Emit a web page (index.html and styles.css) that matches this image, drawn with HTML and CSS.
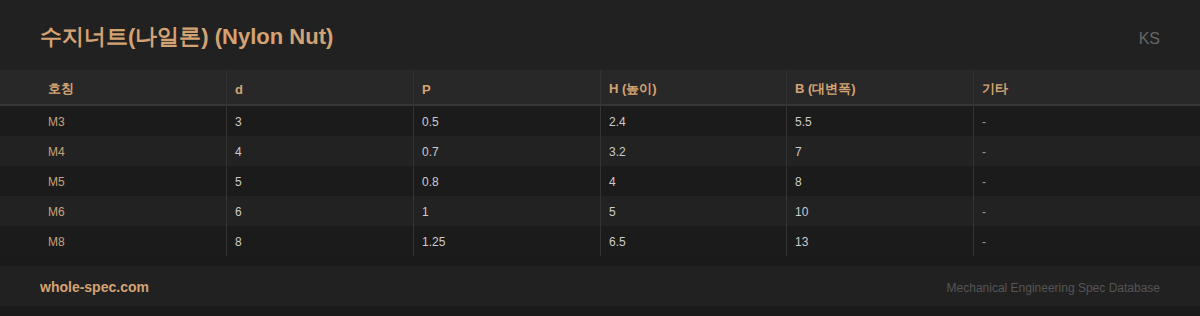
FILE: index.html
```html
<!DOCTYPE html>
<html lang="ko">
<head>
<meta charset="utf-8">
<title>수지너트(나일론) (Nylon Nut)</title>
<link rel="stylesheet" href="styles.css">
</head>
<body>
<header class="top">
  <h1 class="title">수지너트(나일론) (Nylon Nut)</h1>
  <span class="std">KS</span>
</header>
<div class="spec" role="table">
  <div class="row head" role="row">
    <div class="cell first">호칭</div>
    <div class="cell">d</div>
    <div class="cell">P</div>
    <div class="cell">H (높이)</div>
    <div class="cell">B (대변폭)</div>
    <div class="cell">기타</div>
  </div>
  <div class="row" role="row">
    <div class="cell first">M3</div><div class="cell">3</div><div class="cell">0.5</div><div class="cell">2.4</div><div class="cell">5.5</div><div class="cell dash">-</div>
  </div>
  <div class="row alt" role="row">
    <div class="cell first">M4</div><div class="cell">4</div><div class="cell">0.7</div><div class="cell">3.2</div><div class="cell">7</div><div class="cell dash">-</div>
  </div>
  <div class="row" role="row">
    <div class="cell first">M5</div><div class="cell">5</div><div class="cell">0.8</div><div class="cell">4</div><div class="cell">8</div><div class="cell dash">-</div>
  </div>
  <div class="row alt" role="row">
    <div class="cell first">M6</div><div class="cell">6</div><div class="cell">1</div><div class="cell">5</div><div class="cell">10</div><div class="cell dash">-</div>
  </div>
  <div class="row" role="row">
    <div class="cell first">M8</div><div class="cell">8</div><div class="cell">1.25</div><div class="cell">6.5</div><div class="cell">13</div><div class="cell dash">-</div>
  </div>
</div>
<footer class="foot">
  <span class="site">whole-spec.com</span>
  <span class="tag">Mechanical Engineering Spec Database</span>
</footer>
</body>
</html>
```
FILE: styles.css
```css
html, body {
  margin: 0;
  padding: 0;
}
body {
  background: #1a1a1a;
  width: 1200px;
  height: 316px;
  overflow: hidden;
  font-family: "Liberation Sans", Arial, sans-serif;
}
.top {
  box-sizing: border-box;
  height: 70px;
  background: #212121;
  display: flex;
  align-items: center;
  justify-content: space-between;
  padding: 4px 40px 0;
}
.title {
  margin: 0;
  font-size: 22px;
  font-weight: bold;
  color: #d4a373;
}
.std {
  margin-top: 4px;
  font-size: 16px;
  color: #666666;
}
.spec {
  margin-bottom: 10px;
}
.row {
  display: grid;
  grid-template-columns: 226px 187px 187px 186px 187px 1fr;
  height: 30px;
  background: #1b1b1b;
}
.row.alt {
  background: #222222;
}
.row.head {
  height: 34px;
  background: #282828;
  border-bottom: 2px solid #363636;
}
.cell {
  display: flex;
  align-items: center;
  padding-left: 8px;
  padding-top: 2px;
  border-left: 1px solid #333333;
  font-size: 12px;
  color: #cccccc;
}
.cell.first {
  border-left: none;
  padding-left: 48px;
  color: #c9a27a;
}
.head .cell {
  padding-top: 4px;
  font-size: 13px;
  font-weight: bold;
  color: #d4a373;
}
.cell.dash {
  color: #999999;
}
.foot {
  box-sizing: border-box;
  height: 40px;
  background: #212121;
  display: flex;
  align-items: center;
  justify-content: space-between;
  padding: 2px 40px 0;
}
.site {
  font-size: 14px;
  font-weight: bold;
  color: #d4a373;
}
.tag {
  margin-top: 2px;
  font-size: 12px;
  color: #555555;
}
```
